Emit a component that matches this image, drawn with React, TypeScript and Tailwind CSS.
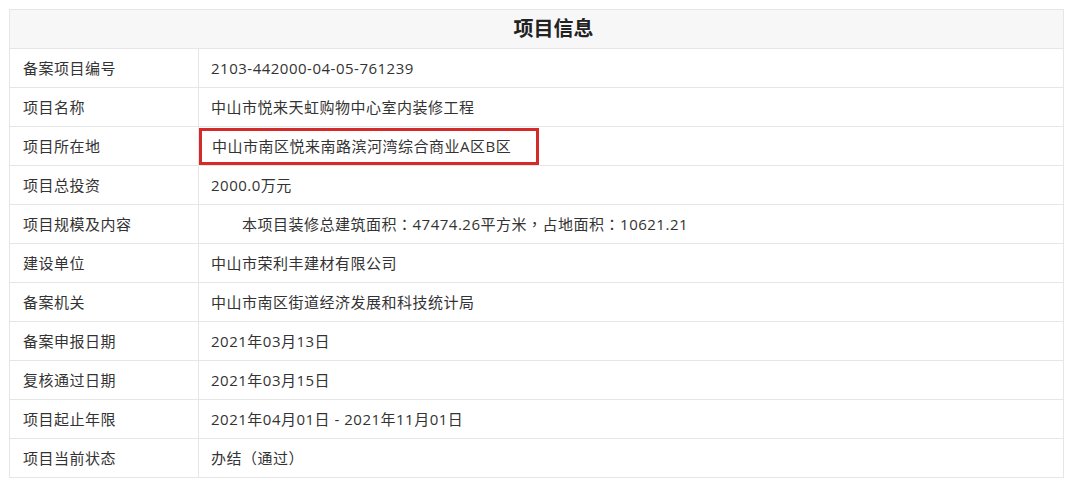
import React from "react";

const P = ({ c }: { c: string }) => (
  <span lang="zh-Hant-TW" style={{ fontFamily: '"Noto Sans CJK TC", sans-serif' }}>
    {c}
  </span>
);

const rows: [string, React.ReactNode][] = [
  ["备案项目编号", "2103-442000-04-05-761239"],
  ["项目名称", "中山市悦来天虹购物中心室内装修工程"],
  ["项目所在地", "中山市南区悦来南路滨河湾综合商业A区B区"],
  ["项目总投资", "2000.0万元"],
  [
    "项目规模及内容",
    <>
      {"\u3000\u3000本项目装修总建筑面积"}
      <P c="：" />
      47474.26平方米
      <P c="，" />
      占地面积
      <P c="：" />
      10621.21
    </>,
  ],
  ["建设单位", "中山市荣利丰建材有限公司"],
  ["备案机关", "中山市南区街道经济发展和科技统计局"],
  ["备案申报日期", "2021年03月13日"],
  ["复核通过日期", "2021年03月15日"],
  ["项目起止年限", "2021年04月01日 - 2021年11月01日"],
  ["项目当前状态", "办结（通过）"],
];

export default function App() {
  return (
    <div
      className="w-[1080px] h-[490px] bg-white pl-[9px] pt-[9px] text-[#333]"
      style={{ fontFamily: '"Open Sans", "Noto Sans CJK SC", sans-serif' }}
    >
      <table className="w-[1055px] border-collapse text-[15px] tracking-[0.5px]">
        <thead>
          <tr className="h-[39px] bg-[#f7f7f7]">
            <th
              colSpan={2}
              className="border border-[#e6e6e6] pl-[34px] text-center text-[20px] font-bold text-[#222] tracking-normal"
            >
              项目信息
            </th>
          </tr>
        </thead>
        <tbody>
          {rows.map(([label, value], i) => (
            <tr key={label} className="h-[39px]">
              <td className="w-[189px] border border-[#e6e6e6] pl-[13px]">{label}</td>
              {i === 2 ? (
                <td className="border border-[#e6e6e6] p-0">
                  <span className="inline-block h-[37px] border-[3px] border-[#d42a2a] pl-[10px] pr-[25px] leading-[31px]">
                    {value}
                  </span>
                </td>
              ) : (
                <td className="border border-[#e6e6e6] pl-[12px] whitespace-pre">{value}</td>
              )}
            </tr>
          ))}
        </tbody>
      </table>
    </div>
  );
}
